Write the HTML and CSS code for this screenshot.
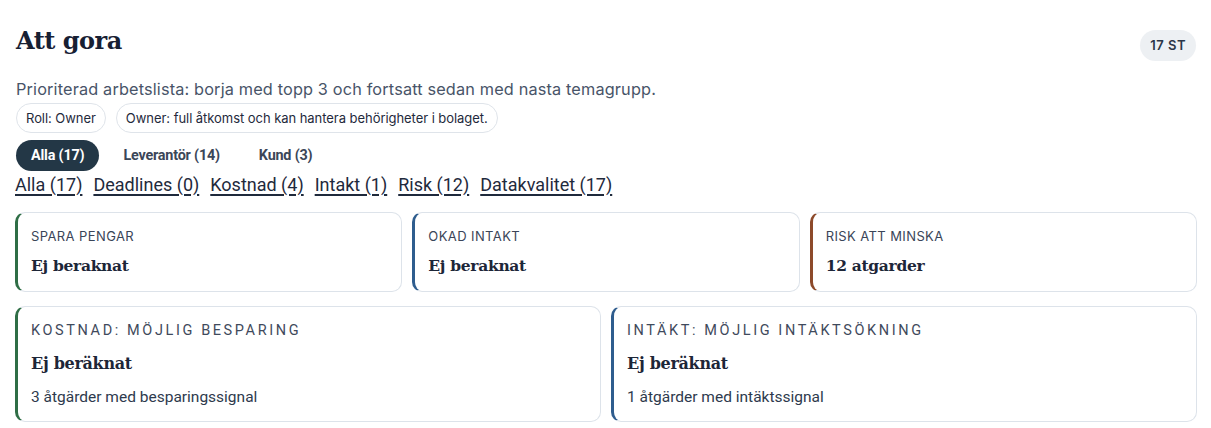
FILE: index.html
```html
<!DOCTYPE html>
<html lang="sv">
<head>
<meta charset="utf-8">
<title>Att gora</title>
<link rel="stylesheet" href="styles.css">
</head>
<body>
<main class="page">
  <header class="head">
    <h1 class="title">Att gora</h1>
    <span class="count">17 ST</span>
  </header>
  <p class="desc">Prioriterad arbetslista: borja med topp 3 och fortsatt sedan med nasta temagrupp.</p>
  <div class="chips">
    <span class="chip">Roll: Owner</span>
    <span class="chip">Owner: full åtkomst och kan hantera behörigheter i bolaget.</span>
  </div>
  <nav class="tabs">
    <span class="tab active">Alla (17)</span>
    <span class="tab">Leverantör (14)</span>
    <span class="tab">Kund (3)</span>
  </nav>
  <nav class="filters">
    <a class="filter" href="#">Alla (17)</a>
    <a class="filter" href="#">Deadlines (0)</a>
    <a class="filter" href="#">Kostnad (4)</a>
    <a class="filter" href="#">Intakt (1)</a>
    <a class="filter" href="#">Risk (12)</a>
    <a class="filter" href="#">Datakvalitet (17)</a>
  </nav>
  <section class="summary">
    <div class="card green">
      <div class="label">SPARA PENGAR</div>
      <div class="value">Ej beraknat</div>
    </div>
    <div class="card blue">
      <div class="label">OKAD INTAKT</div>
      <div class="value">Ej beraknat</div>
    </div>
    <div class="card brown">
      <div class="label">RISK ATT MINSKA</div>
      <div class="value">12 atgarder</div>
    </div>
  </section>
  <section class="detail">
    <div class="card big green">
      <div class="label wide">KOSTNAD: MÖJLIG BESPARING</div>
      <div class="value">Ej beräknat</div>
      <div class="sub">3 åtgärder med besparingssignal</div>
    </div>
    <div class="card big blue">
      <div class="label wide">INTÄKT: MÖJLIG INTÄKTSÖKNING</div>
      <div class="value">Ej beräknat</div>
      <div class="sub">1 åtgärder med intäktssignal</div>
    </div>
  </section>
</main>
</body>
</html>
```

FILE: styles.css
```css
* { box-sizing: border-box; }
html, body { margin: 0; background: #ffffff; }
body {
  font-family: Inter, "Noto Sans", sans-serif;
  color: #1f2a3c;
}
.page {
  padding: 24px 14px 0 15px;
}
.head {
  display: flex;
  justify-content: space-between;
  align-items: flex-start;
}
.title {
  margin: 0;
  font-family: "DejaVu Serif", "Liberation Serif", serif;
  font-weight: 700;
  font-size: 24px;
  line-height: 34px;
  letter-spacing: -0.5px;
  color: #172033;
  padding-left: 1px;
}
.count {
  margin-top: 6px;
  margin-right: 1px;
  height: 31px;
  padding: 0 10px;
  border-radius: 16px;
  background: #edf0f3;
  font-size: 13px;
  font-weight: 600;
  line-height: 31px;
  color: #2b3648;
  letter-spacing: 0.5px;
}
.desc {
  margin: 17px 0 0 1px;
  font-size: 16.3px;
  line-height: 22px;
  color: #485468;
  letter-spacing: 0.15px;
}
.chips {
  display: flex;
  gap: 10px;
  margin-top: 3px;
  margin-left: 1px;
}
.chip {
  height: 30px;
  padding: 0 9px;
  border: 1px solid #dfe4ea;
  border-radius: 15px;
  font-size: 13px;
  line-height: 28px;
  color: #1f2a3c;
  letter-spacing: -0.05px;
}
.tabs {
  display: flex;
  margin-top: 7px;
  margin-left: 1px;
}
.tab {
  height: 31px;
  padding: 0 15px;
  margin-right: 9px;
  border-radius: 16px;
  font-family: Roboto, "Liberation Sans", sans-serif;
  font-size: 14.4px;
  font-weight: 700;
  line-height: 31px;
  color: #3b4658;
  letter-spacing: -0.2px;
}
.tab.active {
  background: #233746;
  color: #ffffff;
}
.filters {
  display: flex;
  gap: 11px;
  margin-top: 1px;
}
.filter {
  font-family: Roboto, "Liberation Sans", sans-serif;
  font-size: 18px;
  line-height: 26px;
  color: #1f2a3c;
  text-decoration: underline;
  text-underline-offset: 3px;
  text-decoration-thickness: 1.5px;
}
.summary {
  display: grid;
  grid-template-columns: 1fr 1fr 1fr;
  gap: 10px;
  margin-top: 14px;
}
.card {
  border: 1px solid #dde3ea;
  border-left: 3px solid #2f6b45;
  border-radius: 10px;
  padding: 15px 14px 14px 13px;
  min-height: 80px;
}
.card.green { border-left-color: #2f6e46; }
.card.blue { border-left-color: #2f5d8e; }
.card.brown { border-left-color: #8d4a2a; }
.label {
  font-size: 13px;
  line-height: 16px;
  color: #3a4558;
  letter-spacing: 0.4px;
}
.value {
  margin-top: 11px;
  font-family: "DejaVu Serif", "Liberation Serif", serif;
  font-weight: 700;
  font-size: 15.5px;
  line-height: 21px;
  color: #1d2638;
  letter-spacing: -0.3px;
}
.detail {
  display: grid;
  grid-template-columns: 1fr 1fr;
  gap: 10px;
  margin-top: 14px;
}
.card.big {
  padding: 14px 14px 14px 13px;
  min-height: 116px;
}
.label.wide {
  font-family: Roboto, "Liberation Sans", sans-serif;
  font-size: 14.5px;
  line-height: 20px;
  letter-spacing: 2.6px;
  color: #3f4a5c;
}
.card.big .value {
  margin-top: 12px;
  font-size: 16px;
  line-height: 22px;
}
.sub {
  margin-top: 12px;
  font-family: Roboto, "Liberation Sans", sans-serif;
  font-size: 15.5px;
  line-height: 20px;
  color: #2e3a4d;
}
```
